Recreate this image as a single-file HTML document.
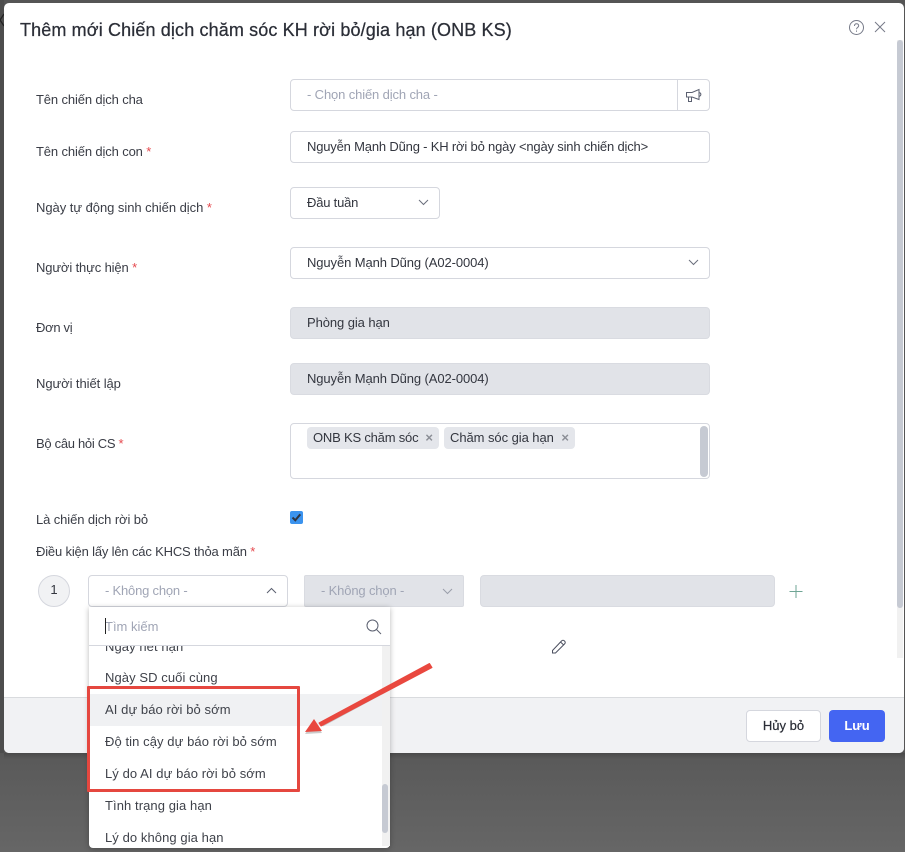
<!DOCTYPE html>
<html lang="vi"><head><meta charset="utf-8"><title>Thêm mới Chiến dịch</title>
<style>
html,body{margin:0;padding:0}
body{width:905px;height:852px;position:relative;overflow:hidden;background:linear-gradient(#555 0,#555 750px,#5a5a5a 760px,#666 852px);font-family:"Liberation Sans","Noto Sans CJK SC",sans-serif;font-size:13px;color:#33363f}
.a{position:absolute;white-space:nowrap}
.modal{position:absolute;left:4px;top:3px;width:900px;height:750px;background:#fff;border-radius:5px;overflow:hidden}
.lb{position:absolute;left:36px;white-space:nowrap;line-height:16px;color:#3a3d46;letter-spacing:-.13px}
.lb i{color:#e5484d;font-style:normal}
.in{position:absolute;box-sizing:border-box;border:1px solid #d5d7de;border-radius:4px;background:#fff;line-height:30px;padding-left:16px;white-space:nowrap;color:#33363f}
.dis{background:#e1e3e8;border-color:#d9dbe1}
.ph{color:#a0a5b5}
.tag{position:absolute;top:427px;height:22px;line-height:22px;background:#e4e6eb;border-radius:4px;padding-left:6px;box-sizing:border-box;color:#33363f}
.tag b{position:absolute;right:6px;top:0;color:#8b8e96;font-size:13px;letter-spacing:0}
.opt{position:absolute;left:89px;width:293px;height:32px;line-height:32px;padding-left:16px;box-sizing:border-box;white-space:nowrap;color:#3f424a;letter-spacing:.08px}
</style></head><body>
<div class="a" style="left:0;top:0;width:4px;height:753px;background:#4d4d4d"></div>
<svg class="a" style="left:0;top:13px" width="5" height="14" viewBox="0 0 5 14" fill="none" stroke="#222" stroke-width="1.300"><path d="M4 1L0 7l4 6"/></svg>
<div class="modal"></div>
<div class="a" style="left:4px;top:753px;width:901px;height:6px;background:linear-gradient(#4a4a4a,#5a5a5a)"></div>
<div class="a" style="left:20px;top:19px;font-size:18px;letter-spacing:.13px;line-height:22px;font-weight:400;color:#2b2e37;-webkit-text-stroke:.25px #2b2e37">Thêm mới Chiến dịch chăm sóc KH rời bỏ/gia hạn (ONB KS)</div>
<svg class="a" style="left:849px;top:20px" width="16" height="16" viewBox="0 0 16 16" fill="none" stroke="#767a88"><circle cx="7.500" cy="7.500" r="7"/><path d="M5.500 6c0-3 4.200-2.800 4.200-.3 0 1.600-2.200 1.700-2.200 3.500"/><path d="M7.500 10.500v1.200"/></svg>
<svg class="a" style="left:874px;top:21px" width="12" height="12" viewBox="0 0 12 12" stroke="#767a88" fill="none"><path d="M1 1l10 10M11 1L1 11"/></svg>
<div class="a" style="left:897px;top:40px;width:6px;height:618px;background:#f1f1f1"></div>
<div class="a" style="left:897px;top:40px;width:6px;height:568px;background:#c6cad3;border-radius:3px"></div>

<div class="lb" style="top:92px">Tên chiến dịch cha</div>
<div class="in ph" style="left:290px;top:79px;width:388px;height:32px;border-radius:4px 0 0 4px;letter-spacing:-.13px">- Chọn chiến dịch cha -</div>
<div class="in" style="left:677px;top:79px;width:33px;height:32px;border-radius:0 4px 4px 0;padding:0"></div>
<svg class="a" style="left:685px;top:88px" width="18" height="15" viewBox="0 0 18 15" fill="none" stroke="#5b6070"><path d="M1.500 4.500h5.500L14 1.500v10L7 9H1.500zM3.500 9v4.500h3V9M14 4.500c2.500.5 2.500 3 0 4"/></svg>

<div class="lb" style="top:144px">Tên chiến dịch con <i>*</i></div>
<div class="in" style="left:290px;top:131px;width:420px;height:32px;letter-spacing:-.18px">Nguyễn Mạnh Dũng - KH rời bỏ ngày &lt;ngày sinh chiến dịch&gt;</div>

<div class="lb" style="top:200px;letter-spacing:-.04px">Ngày tự động sinh chiến dịch <i>*</i></div>
<div class="in" style="left:290px;top:187px;width:150px;height:32px;letter-spacing:-.2px">Đầu tuần</div>
<svg class="a" style="left:418px;top:199px" width="11" height="7" viewBox="0 0 11 7" fill="none" stroke="#6b6f7c"><path d="M1 1l4.500 4.500L10 1"/></svg>

<div class="lb" style="top:260px">Người thực hiện <i>*</i></div>
<div class="in" style="left:290px;top:247px;width:420px;height:32px;letter-spacing:-.1px">Nguyễn Mạnh Dũng (A02-0004)</div>
<svg class="a" style="left:688px;top:259px" width="11" height="7" viewBox="0 0 11 7" fill="none" stroke="#6b6f7c"><path d="M1 1l4.500 4.500L10 1"/></svg>

<div class="lb" style="top:320px;letter-spacing:-.3px">Đơn vị</div>
<div class="in dis" style="left:290px;top:307px;width:420px;height:32px;letter-spacing:-.08px">Phòng gia hạn</div>

<div class="lb" style="top:376px;letter-spacing:-.07px">Người thiết lập</div>
<div class="in dis" style="left:290px;top:363px;width:420px;height:32px;letter-spacing:-.1px">Nguyễn Mạnh Dũng (A02-0004)</div>

<div class="lb" style="top:436px;letter-spacing:-.3px">Bộ câu hỏi CS <i>*</i></div>
<div class="in" style="left:290px;top:423px;width:420px;height:56px"></div>
<div class="tag" style="left:307px;width:132px;letter-spacing:-.2px">ONB KS chăm sóc<b>×</b></div>
<div class="tag" style="left:444px;width:131px;letter-spacing:-.06px">Chăm sóc gia hạn<b>×</b></div>
<div class="a" style="left:700px;top:426px;width:8px;height:51px;background:#c6cad3;border-radius:4px"></div>

<div class="lb" style="top:512px;letter-spacing:-.1px">Là chiến dịch rời bỏ</div>
<div class="a" style="left:290px;top:511px;width:13px;height:13px;background:#3b93ee;border-radius:2px"></div>
<svg class="a" style="left:290px;top:511px" width="13" height="13" viewBox="0 0 13 13" fill="none" stroke="#2f3440" stroke-width="2"><path d="M2.500 6.500l2.800 2.800 5-6"/></svg>
<div class="lb" style="top:544px;letter-spacing:-.17px">Điều kiện lấy lên các KHCS thỏa mãn <i>*</i></div>

<div class="a" style="left:38px;top:575px;width:32px;height:32px;box-sizing:border-box;border:1px solid #d5d7de;border-radius:50%;background:#f1f2f4;text-align:center;line-height:28px">1</div>
<div class="in ph" style="left:88px;top:575px;width:200px;height:32px;letter-spacing:-.2px">- Không chọn -</div>
<svg class="a" style="left:266px;top:587px" width="11" height="7" viewBox="0 0 11 7" fill="none" stroke="#5b6070"><path d="M1 6l4.500-4.500L10 6"/></svg>
<div class="in dis ph" style="left:304px;top:575px;width:160px;height:32px;border-radius:2px;letter-spacing:-.15px">- Không chọn -</div>
<svg class="a" style="left:442px;top:588px" width="11" height="7" viewBox="0 0 11 7" fill="none" stroke="#9a9eaa"><path d="M1 1l4.500 4.500L10 1"/></svg>
<div class="in dis" style="left:480px;top:575px;width:295px;height:32px"></div>
<svg class="a" style="left:789px;top:585px" width="14" height="14" viewBox="0 0 14 14" stroke="#6fa595"><path d="M7 0v13M0.500 6.500h13" fill="none"/></svg>
<svg class="a" style="left:551px;top:639px" width="16" height="16" viewBox="0 0 16 16" fill="none" stroke="#4c5060"><path d="M1.500 11.500L10.500 2q1.500-1.500 3 0t0 3L4.500 14H1.500zM9.500 3l3.500 3.200"/></svg>

<div class="a" style="left:4px;top:697px;width:900px;height:56px;background:#f1f2f4;border-top:1px solid #d9dbde;box-sizing:border-box;border-radius:0 0 5px 5px"></div>
<div class="in" style="left:746px;top:710px;width:75px;height:32px;padding:0;text-align:center;color:#2b2e37;-webkit-text-stroke:.2px #2b2e37">Hủy bỏ</div>
<div class="a" style="left:829px;top:710px;width:56px;height:32px;border-radius:4px;background:#4465f2;color:#fff;text-align:center;line-height:32px;font-weight:700">Lưu</div>

<div class="a" style="left:89px;top:607px;width:301px;height:241px;background:#fff;border-radius:0 0 4px 4px;box-shadow:0 1px 6px rgba(0,0,0,.28);overflow:hidden"></div>
<div class="opt" style="top:631px">Ngày hết hạn</div>
<div class="a" style="left:89px;top:607px;width:301px;height:39px;background:#fff;border-bottom:1px solid #d5d7de;box-sizing:border-box"></div>
<div class="a ph" style="left:105px;top:619px;line-height:16px">Tìm kiếm</div>
<div class="a" style="left:105px;top:618px;width:1px;height:16px;background:#222"></div>
<svg class="a" style="left:366px;top:619px" width="16" height="16" viewBox="0 0 16 16" fill="none" stroke="#5b6070"><circle cx="6.500" cy="6.500" r="5.500"/><path d="M10.500 10.500l4.500 4.500"/></svg>
<div class="a" style="left:382px;top:646px;width:8px;height:200px;background:#f1f1f1"></div>
<div class="a" style="left:382px;top:784px;width:6px;height:49px;background:#c6cad3;border-radius:3px"></div>
<div class="opt" style="top:662px">Ngày SD cuối cùng</div>
<div class="opt" style="top:694px;background:#f0f1f3">AI dự báo rời bỏ sớm</div>
<div class="opt" style="top:726px">Độ tin cậy dự báo rời bỏ sớm</div>
<div class="opt" style="top:758px">Lý do AI dự báo rời bỏ sớm</div>
<div class="opt" style="top:790px">Tình trạng gia hạn</div>
<div class="opt" style="top:822px;height:25px;overflow:hidden">Lý do không gia hạn</div>

<div class="a" style="left:87px;top:686px;width:207px;height:100px;border:3px solid #e5473f;border-radius:1px"></div>
<svg class="a" style="left:295px;top:655px" width="145" height="85" viewBox="0 0 145 85">
<g opacity=".2" transform="translate(0,2)"><path d="M136 9L27 68" stroke="#000" stroke-width="3.500" fill="none"/><path d="M10 77L19 64 27 76z" fill="#000"/></g>
<path d="M134.500 8.500L137 12.500 26 71 24 68z" fill="#e9483f" stroke="#e9483f" stroke-width="1" stroke-linejoin="round"/>
<path d="M10 77L19 64 27 76z" fill="#e9483f"/></svg>
</body></html>
